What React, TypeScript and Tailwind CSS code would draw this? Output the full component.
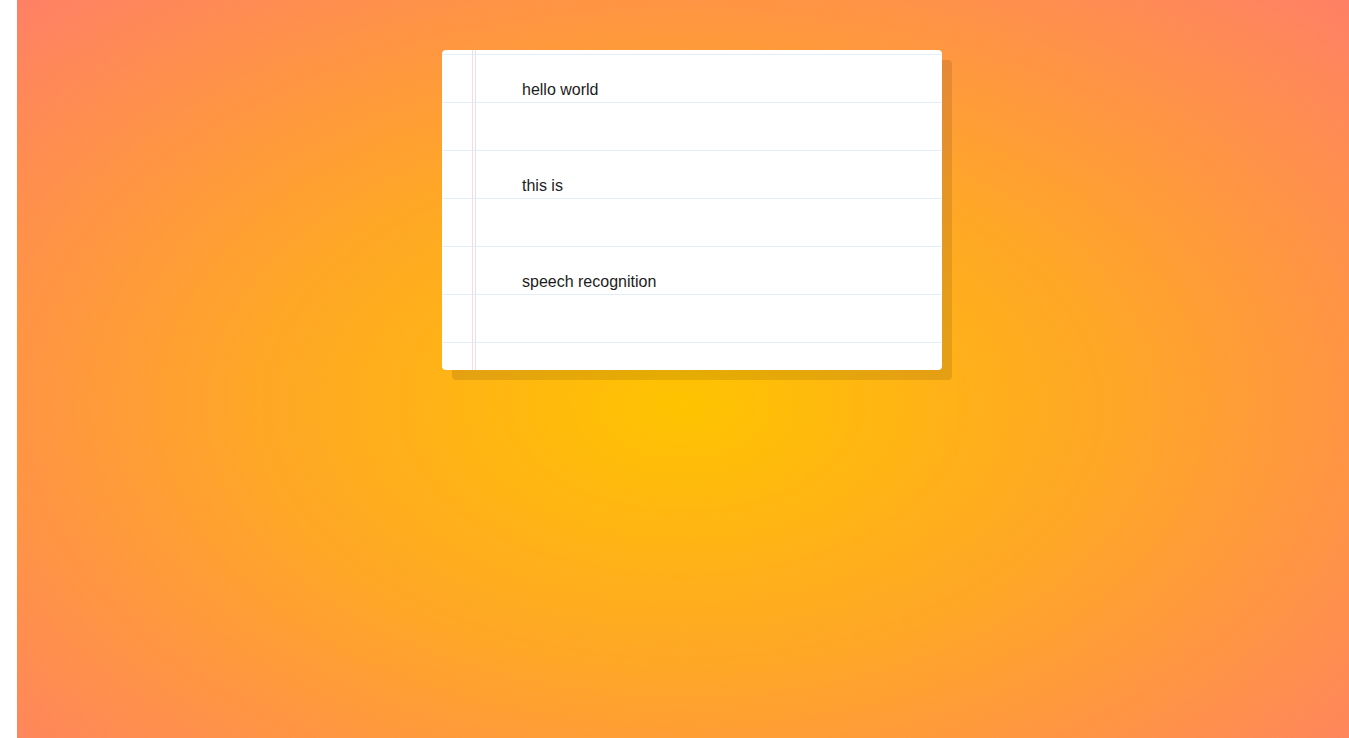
import React from 'react'

const rows = ['hello world', '', 'this is', '', 'speech recognition', '', '']

const App = () => {
    return (
        <div className="flex h-[738px] w-full bg-white">
            <div className="w-[17px] shrink-0" />
            <div className="flex-1 bg-[radial-gradient(ellipse_at_50%_55%,#ffc300_0%,#ffa726_45%,#ff8066_100%)] pl-[425px] pt-[50px]">
                <div className="relative h-[320px] w-[500px] rounded-[4px] bg-white shadow-[10px_10px_0_rgba(0,0,0,0.1)] pt-[4px] font-['Liberation_Sans',Arial,sans-serif] text-[16px] text-[#1c1c1c]">
                    <div className="absolute top-0 bottom-0 left-[30px] w-px bg-[#f1dde4]" />
                    <div className="absolute top-0 bottom-0 left-[33px] w-px bg-[#f1dde4]" />
                    {rows.map((text, i) => (
                        <div key={i} className="flex h-[48px] items-end border-t border-[#e3eff8] pb-[3px] pl-[80px] leading-[18px]">
                            {text}
                        </div>
                    ))}
                </div>
            </div>
        </div>
    )
}

export default App
